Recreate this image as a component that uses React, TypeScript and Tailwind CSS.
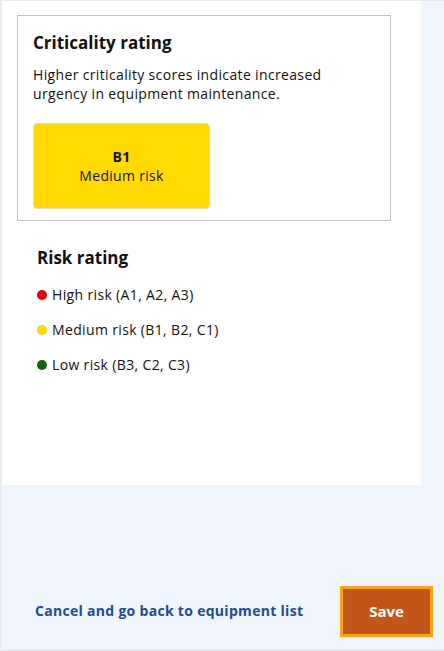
const dots = [
  { color: 'bg-[#e5000b]', label: 'High risk (A1, A2, A3)' },
  { color: 'bg-[#ffd700]', label: 'Medium risk (B1, B2, C1)' },
  { color: 'bg-[#16620f]', label: 'Low risk (B3, C2, C3)' },
]

export default function App() {
  return (
    <main
      className="h-[651px] w-[444px] flex flex-col bg-[#f0f5fe] border-l-2 border-t border-b-2 border-[#e9ebef] text-[#111]"
      style={{ fontFamily: '"Open Sans", "Noto Sans", sans-serif' }}
    >
      <div className="w-[419px] h-[484px] bg-white pt-[14px] pl-[15px]">
        <section className="w-[374px] border border-[#c3c3c3] px-[15px] pt-[15px] pb-[11px]">
          <h2 className="text-[17px] font-bold leading-[24px]">Criticality rating</h2>
          <p className="mt-[10px] text-[14px] leading-[19px] tracking-[0.35px] w-[320px]">
            Higher criticality scores indicate increased urgency in equipment maintenance.
          </p>
          <div className="mt-[20px] w-[177px] h-[86px] rounded-[4px] border border-[#e2dccb] bg-[#ffd900] flex flex-col items-center justify-center text-[14px] leading-[19px] tracking-[0.3px]">
            <span className="font-bold">B1</span>
            <span>Medium risk</span>
          </div>
        </section>

        <section className="pl-[20px] pt-[25px]">
          <h3 className="text-[17px] font-bold leading-[24px]">Risk rating</h3>
          <ul className="mt-[15px] flex flex-col gap-[16px]">
            {dots.map(d => (
              <li key={d.label} className="flex items-center gap-[5px] text-[14px] leading-[19px] tracking-[0.35px]">
                <span className={`w-[10px] h-[10px] rounded-full ${d.color}`} />
                {d.label}
              </li>
            ))}
          </ul>
        </section>
      </div>

      <div className="flex-1 flex items-end justify-between pl-[33px] pr-[11px] pb-[12px]">
        <a className="mb-[16px] text-[14px] font-bold tracking-[0.3px] text-[#1d4c9a] cursor-pointer">
          Cancel and go back to equipment list
        </a>
        <button className="w-[93px] h-[51px] border-[3px] border-[#ffa312] bg-[#c25618] text-white font-bold text-[15px]">
          Save
        </button>
      </div>
    </main>
  )
}
